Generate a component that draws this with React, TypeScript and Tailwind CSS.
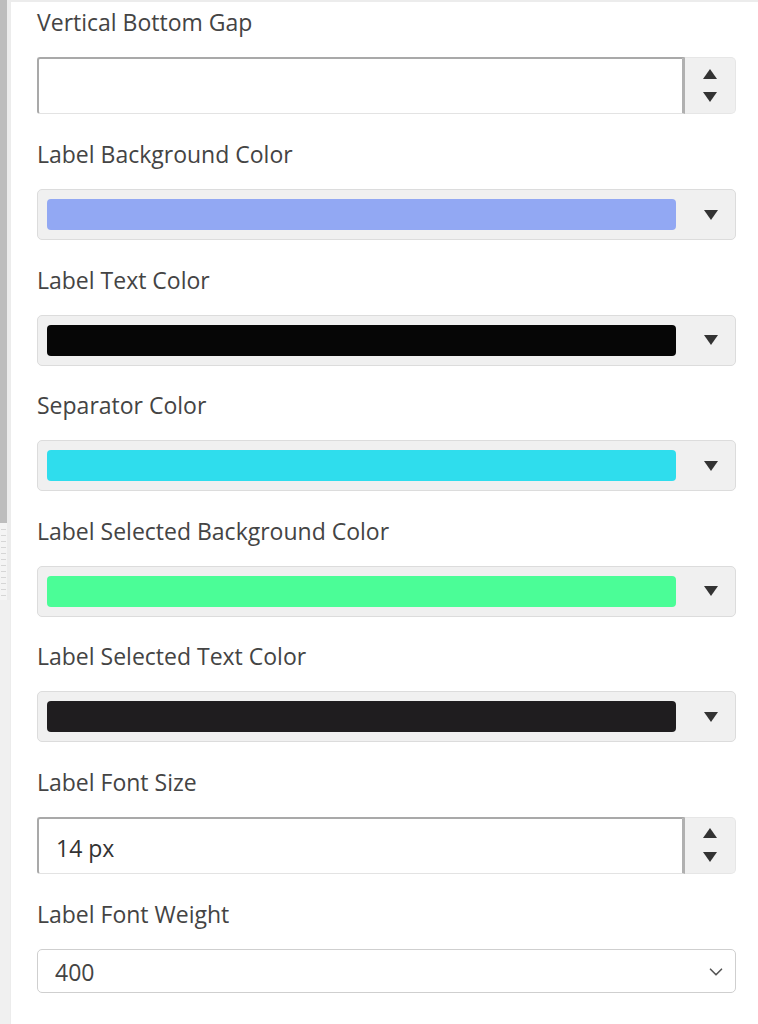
import { ChevronDown } from 'lucide-react';

const colorFields = [
  { label: 'Label Background Color', color: '#92a8f3' },
  { label: 'Label Text Color', color: '#060606' },
  { label: 'Separator Color', color: '#2fdded' },
  { label: 'Label Selected Background Color', color: '#4bfd97' },
  { label: 'Label Selected Text Color', color: '#1f1d1f' },
];

const Label = ({ children }: { children: React.ReactNode }) => (
  <div className="text-[23px] leading-[28px] text-[#444] mb-[21px]">{children}</div>
);

const TriangleUp = () => (
  <svg width="14" height="10" viewBox="0 0 14 10">
    <path d="M7 0 L14 10 L0 10 Z" fill="#333" />
  </svg>
);

const TriangleDown = () => (
  <svg width="14" height="10" viewBox="0 0 14 10">
    <path d="M0 0 L14 0 L7 10 Z" fill="#333" />
  </svg>
);

const NumberInput = ({ value }: { value: string }) => (
  <div className="flex h-[57px]">
    <div className="flex-1 flex items-center px-[17px] pt-[6px] bg-white rounded-l-[3px] border border-[#e3e3e3] border-t-[#a9a9a9] border-l-[#a9a9a9] border-t-2 border-l-2 border-r-[3px] border-r-[#b0b0b0] text-[23px] text-[#333]">
      {value}
    </div>
    <div className="w-[51px] flex flex-col bg-[#f0f0f0] rounded-r-[5px] border border-l-0 border-[#e6e6e6]">
      <div className="flex-1 flex items-center justify-center pt-1">
        <TriangleUp />
      </div>
      <div className="flex-1 flex items-center justify-center pb-1">
        <TriangleDown />
      </div>
    </div>
  </div>
);

const ColorSelect = ({ color }: { color: string }) => (
  <div className="flex items-center h-[51px] bg-[#f0f0f0] border border-[#dcdcdc] rounded-[5px] pl-[9px]">
    <div className="flex-1 h-[31px] rounded-[4px]" style={{ backgroundColor: color }} />
    <div className="w-[59px] flex items-center justify-center pl-[10px]">
      <TriangleDown />
    </div>
  </div>
);

export default function App() {
  return (
    <div className="flex min-h-[1024px] bg-white" style={{ fontFamily: '"Open Sans", "Noto Sans", sans-serif' }}>
      <div className="w-[10px] flex flex-col">
        <div className="h-[523px] bg-[#bdbdbd] border-r-[3px] border-[#ececec]" />
        <div className="h-[77px] bg-[#f4f4f4] border-r-[3px] border-[#ececec] flex flex-col gap-[5px] pt-[6px] pl-[1px]">
          {Array.from({ length: 12 }).map((_, i) => (
            <div key={i} className="w-[5px] h-px bg-[#d6d6d6]" />
          ))}
        </div>
        <div className="flex-1 bg-[#f0f0f0]" />
      </div>
      <div className="flex-1 border-l border-t-2 border-[#ececec] pt-[6px] pl-[26px] pr-[22px]">
        <Label>Vertical Bottom Gap</Label>
        <div className="mb-[26px]">
          <NumberInput value="" />
        </div>
        {colorFields.map((f) => (
          <div key={f.label} className="mb-[25.5px]">
            <Label>{f.label}</Label>
            <ColorSelect color={f.color} />
          </div>
        ))}
        <Label>Label Font Size</Label>
        <div className="mb-[26px]">
          <NumberInput value="14 px" />
        </div>
        <Label>Label Font Weight</Label>
        <div className="flex items-center h-[44px] border border-[#cfcfcf] rounded-[5px] pl-[17px] pr-[8px] pt-[3px] text-[23px] text-[#444]">
          <span className="flex-1">400</span>
          <ChevronDown size={22} strokeWidth={1.8} color="#555" />
        </div>
      </div>
    </div>
  );
}
